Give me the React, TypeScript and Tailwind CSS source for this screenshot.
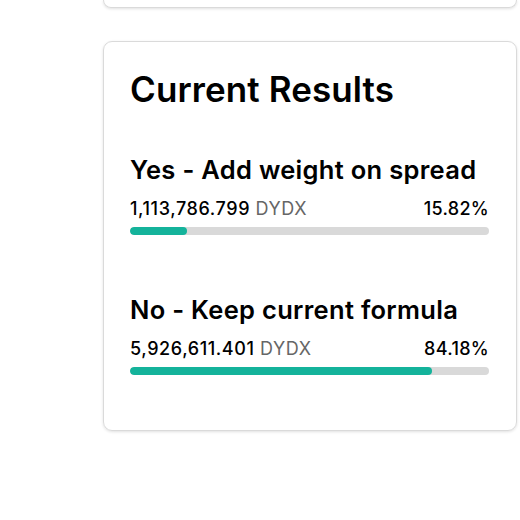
import React from "react";

const rows = [
  { label: "Yes - Add weight on spread", amount: "1,113,786.799", pct: 15.82 },
  { label: "No - Keep current formula", amount: "5,926,611.401", pct: 84.18 },
];

export default function App() {
  return (
    <div className="w-[520px] h-[520px] bg-white relative overflow-hidden" style={{ fontFamily: "Inter, 'Noto Sans', sans-serif" }}>
      <div className="ml-[103px] w-[414px] h-[8px] border border-t-0 border-[#dadada] rounded-b-[9px] shadow-[0_1px_3px_rgba(0,0,0,0.12)]" />
      <div className="ml-[103px] mt-[33px] w-[414px] h-[390px] border border-[#dadada] rounded-[9px] shadow-[0_1px_3px_rgba(0,0,0,0.12)] pl-[26px] pr-[27px] pt-[25px]">
        <h2 className="text-[35px] leading-[44px] font-semibold text-black tracking-[0.1px]">Current Results</h2>
        <div className="mt-[43px] flex flex-col gap-[59px]">
          {rows.map((r) => (
            <div key={r.label}>
              <div className="text-[25.5px] leading-[32px] font-semibold text-black tracking-[0.3px]">{r.label}</div>
              <div className="mt-[12px] flex justify-between text-[18px] leading-[22px] text-black font-medium tracking-[0.6px]">
                <span>
                  {r.amount} <span className="text-[#666666] font-normal">DYDX</span>
                </span>
                <span className="tracking-[0.3px]">{r.pct.toFixed(2)}%</span>
              </div>
              <div className="mt-[7px] h-[8px] rounded-full bg-[#d9d9d9] overflow-hidden">
                <div className="h-full rounded-full bg-[#14b39b]" style={{ width: `${r.pct}%` }} />
              </div>
            </div>
          ))}
        </div>
      </div>
    </div>
  );
}
